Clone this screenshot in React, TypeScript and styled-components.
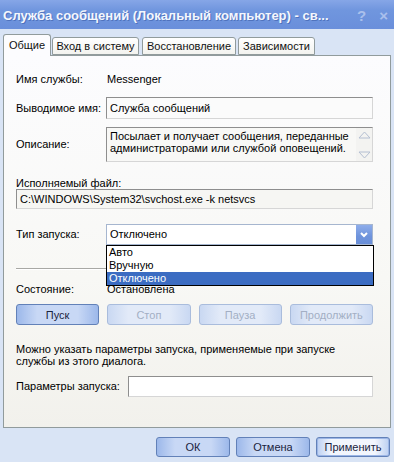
import styled, { createGlobalStyle } from "styled-components";

const GlobalStyle = createGlobalStyle`
  html, body {
    margin: 0;
    padding: 0;
    background: #d9e4f5;
  }
  body {
    font-family: "Liberation Sans", "DejaVu Sans", sans-serif;
    font-size: 11px;
    color: #000;
  }
`;

const Window = styled.div`
  width: 394px;
  height: 462px;
  display: flex;
  flex-direction: column;
  background: #d9e4f5;
  overflow: hidden;
`;

const TitleBar = styled.div`
  height: 29px;
  flex: none;
  display: flex;
  align-items: center;
  padding: 0 6px 0 3px;
  background: linear-gradient(#86a6e7, #7096de 35%, #6a8fdb);
`;

const TitleText = styled.div`
  flex: 1;
  font-weight: bold;
  font-size: 13px;
  color: #f4f7fd;
  text-shadow: 1px 1px 0 #4f72bd;
  white-space: nowrap;
  padding-top: 2px;
`;

const TitleButton = styled.span<{ $ml: number }>`
  margin-left: ${(p) => p.$ml}px;
  font-weight: bold;
  font-size: 15px;
  color: #aac0ec;
  padding-top: 2px;
`;

const Body = styled.div`
  flex: 1;
  display: flex;
  flex-direction: column;
  padding: 5px 3px 0 3px;
`;

const TabStrip = styled.div`
  height: 21px;
  display: flex;
  align-items: flex-end;
`;

const Tab = styled.div<{ $active?: boolean; $w: number; $mr: number }>`
  box-sizing: border-box;
  width: ${(p) => p.$w}px;
  margin-right: ${(p) => p.$mr}px;
  height: ${(p) => (p.$active ? 22 : 18)}px;
  margin-bottom: ${(p) => (p.$active ? -1 : 0)}px;
  position: relative;
  z-index: ${(p) => (p.$active ? 2 : 0)};
  border: 1px solid #919b9c;
  border-bottom: ${(p) => (p.$active ? "none" : "1px solid #919b9c")};
  border-radius: 3px 3px 0 0;
  background: ${(p) => (p.$active ? "#fcfcfe" : "linear-gradient(#ffffff, #f3f3ef)")};
  display: flex;
  align-items: center;
  justify-content: center;
  padding-bottom: ${(p) => (p.$active ? 2 : 0)}px;
  white-space: nowrap;
  font-size: 11px;
  color: #111;
`;

const Panel = styled.div`
  box-sizing: border-box;
  width: 388px;
  height: 373px;
  border: 1px solid #919b9c;
  background: linear-gradient(#fcfcfe, #f8f8f5 60%, #f2f1ec);
  padding: 0 17px 0 12px;
  display: flex;
  flex-direction: column;
`;

const Row = styled.div<{ $mt: number; $h: number; $label?: number }>`
  margin-top: ${(p) => p.$mt}px;
  height: ${(p) => p.$h}px;
  display: grid;
  grid-template-columns: ${(p) => p.$label ?? 90}px 1fr;
  align-items: center;
  line-height: 13px;
`;

const Label = styled.div`
  white-space: nowrap;
`;

const Plain = styled.div`
  white-space: nowrap;
  padding-left: 1px;
`;

const Box = styled.div<{ $bg?: string }>`
  box-sizing: border-box;
  height: 100%;
  border: 1px solid;
  border-color: #8e8e8e #d6d6d6 #d6d6d6 #8e8e8e;
  background: ${(p) => p.$bg ?? "#fbfbfb"};
  padding: 0 3px;
  display: flex;
  align-items: center;
  white-space: nowrap;
  overflow: hidden;
`;

const DescBox = styled.div`
  box-sizing: border-box;
  height: 100%;
  border: 1px solid;
  border-color: #8e8e8e #d6d6d6 #d6d6d6 #8e8e8e;
  background: #f8f8f6;
  display: flex;
  align-self: stretch;
`;

const DescText = styled.div`
  flex: 1;
  padding: 2px 2px 0 3px;
  line-height: 12px;
  white-space: nowrap;
`;

const ScrollCol = styled.div`
  width: 16px;
  display: flex;
  flex-direction: column;
  justify-content: space-between;
  align-items: center;
  padding: 3px 0 2px;
  background: #f3f3f1;
`;

const PlainLabel = styled.div<{ $mt: number }>`
  margin-top: ${(p) => p.$mt}px;
  height: 12px;
  line-height: 12px;
  white-space: nowrap;
`;

const PathBox = styled(Box)`
  height: 20px;
  background: #f6f6f3;
`;

const SelectWrap = styled.div`
  position: relative;
  height: 100%;
`;

const SelectBox = styled.div`
  box-sizing: border-box;
  height: 100%;
  border: 1px solid #a6b6cf;
  background: #fff;
  display: flex;
  align-items: center;
  padding-left: 3px;
`;

const SelectValue = styled.div`
  flex: 1;
`;

const DropButton = styled.div`
  width: 16px;
  height: 100%;
  background: linear-gradient(#8eadea, #6e93dc 60%, #6a8fd8);
  display: flex;
  align-items: center;
  justify-content: center;
`;

const DropList = styled.div`
  position: absolute;
  top: 100%;
  left: 0;
  right: -1px;
  z-index: 5;
  box-sizing: border-box;
  border: 1px solid #000;
  background: #fff;
`;

const DropItem = styled.div<{ $sel?: boolean }>`
  height: 13px;
  line-height: 13px;
  padding-left: 2px;
  background: ${(p) => (p.$sel ? "#3b6cc2" : "transparent")};
  color: ${(p) => (p.$sel ? "#fff" : "#000")};
`;

const Separator = styled.div<{ $mt: number }>`
  margin-top: ${(p) => p.$mt}px;
  height: 1px;
  background: #a8a8a4;
  border-bottom: 1px solid #fff;
`;

const ButtonGrid = styled.div`
  margin-top: 8px;
  height: 21px;
  display: grid;
  grid-template-columns: repeat(4, 1fr);
  column-gap: 8px;
`;

const Button = styled.div<{ $disabled?: boolean; $w?: number }>`
  box-sizing: border-box;
  ${(p) => (p.$w ? `width: ${p.$w}px;` : "")}
  height: 100%;
  border: 1px solid ${(p) => (p.$disabled ? "#a9bcdc" : "#6281b8")};
  border-radius: 3px;
  background: ${(p) =>
    p.$disabled
      ? "linear-gradient(90deg, #c9d8f2, #e2eaf8 25%, #e2eaf8 75%, #c9d8f2)"
      : "linear-gradient(90deg, #9cb8ea, #c8d8f5 25%, #c8d8f5 75%, #9cb8ea)"};
  color: ${(p) => (p.$disabled ? "#a3afc4" : "#1a2440")};
  display: flex;
  align-items: center;
  justify-content: center;
  white-space: nowrap;
`;

const ApplyButton = styled(Button)`
  background: linear-gradient(90deg, #bcd0f2, #f2f6fd 20%, #f2f6fd 80%, #bcd0f2);
  box-shadow: inset 0 0 0 1px #9cb6e6;
`;

const Para = styled.div`
  margin-top: 18px;
  line-height: 12px;
`;

const Footer = styled.div`
  display: flex;
  justify-content: flex-end;
  gap: 6px;
  padding: 9px 1px 0 0;
  height: 20px;
`;

const Up = () => (
  <svg width="13" height="8" viewBox="0 0 13 8">
    <path d="M1 7 L6.5 1 L12 7 Z" fill="none" stroke="#b4bfd2" strokeWidth="1" />
  </svg>
);

const Down = () => (
  <svg width="13" height="8" viewBox="0 0 13 8">
    <path d="M1 1 L6.5 7 L12 1 Z" fill="none" stroke="#b4bfd2" strokeWidth="1" />
  </svg>
);

const Chevron = () => (
  <svg width="8" height="6" viewBox="0 0 8 6">
    <path d="M1 1 L4 4 L7 1" fill="none" stroke="#fff" strokeWidth="2" />
  </svg>
);

export default function App() {
  return (
    <>
      <GlobalStyle />
      <Window>
        <TitleBar>
          <TitleText>Служба сообщений (Локальный компьютер) - св...</TitleText>
          <TitleButton $ml={0}>?</TitleButton>
          <TitleButton $ml={13}>×</TitleButton>
        </TitleBar>
        <Body>
          <TabStrip>
            <Tab $active $w={48} $mr={1}>Общие</Tab>
            <Tab $w={87} $mr={3}>Вход в систему</Tab>
            <Tab $w={94} $mr={2}>Восстановление</Tab>
            <Tab $w={77} $mr={0}>Зависимости</Tab>
          </TabStrip>
          <Panel>
            <Row $mt={17} $h={13}>
              <Label>Имя службы:</Label>
              <Plain>Messenger</Plain>
            </Row>
            <Row $mt={11} $h={22}>
              <Label>Выводимое имя:</Label>
              <Box>Служба сообщений</Box>
            </Row>
            <Row $mt={8} $h={35}>
              <Label>Описание:</Label>
              <DescBox>
                <DescText>
                  Посылает и получает сообщения, переданные
                  <br />
                  администраторами или службой оповещений.
                </DescText>
                <ScrollCol>
                  <Up />
                  <Down />
                </ScrollCol>
              </DescBox>
            </Row>
            <PlainLabel $mt={15}>Исполняемый файл:</PlainLabel>
            <PathBox>C:\WINDOWS\System32\svchost.exe -k netsvcs</PathBox>
            <Row $mt={15} $h={21}>
              <Label>Тип запуска:</Label>
              <SelectWrap>
                <SelectBox>
                  <SelectValue>Отключено</SelectValue>
                  <DropButton>
                    <Chevron />
                  </DropButton>
                </SelectBox>
                <DropList>
                  <DropItem>Авто</DropItem>
                  <DropItem>Вручную</DropItem>
                  <DropItem $sel>Отключено</DropItem>
                </DropList>
              </SelectWrap>
            </Row>
            <Separator $mt={23} />
            <Row $mt={13} $h={13}>
              <Label>Состояние:</Label>
              <Plain>Остановлена</Plain>
            </Row>
            <ButtonGrid>
              <Button>Пуск</Button>
              <Button $disabled>Стоп</Button>
              <Button $disabled>Пауза</Button>
              <Button $disabled>Продолжить</Button>
            </ButtonGrid>
            <Para>
              Можно указать параметры запуска, применяемые при запуске
              <br />
              службы из этого диалога.
            </Para>
            <Row $mt={9} $h={21} $label={112}>
              <Label>Параметры запуска:</Label>
              <Box $bg="#fff" />
            </Row>
          </Panel>
          <Footer>
            <Button $w={74}>ОК</Button>
            <Button $w={74}>Отмена</Button>
            <ApplyButton $w={74}>Применить</ApplyButton>
          </Footer>
        </Body>
      </Window>
    </>
  );
}
